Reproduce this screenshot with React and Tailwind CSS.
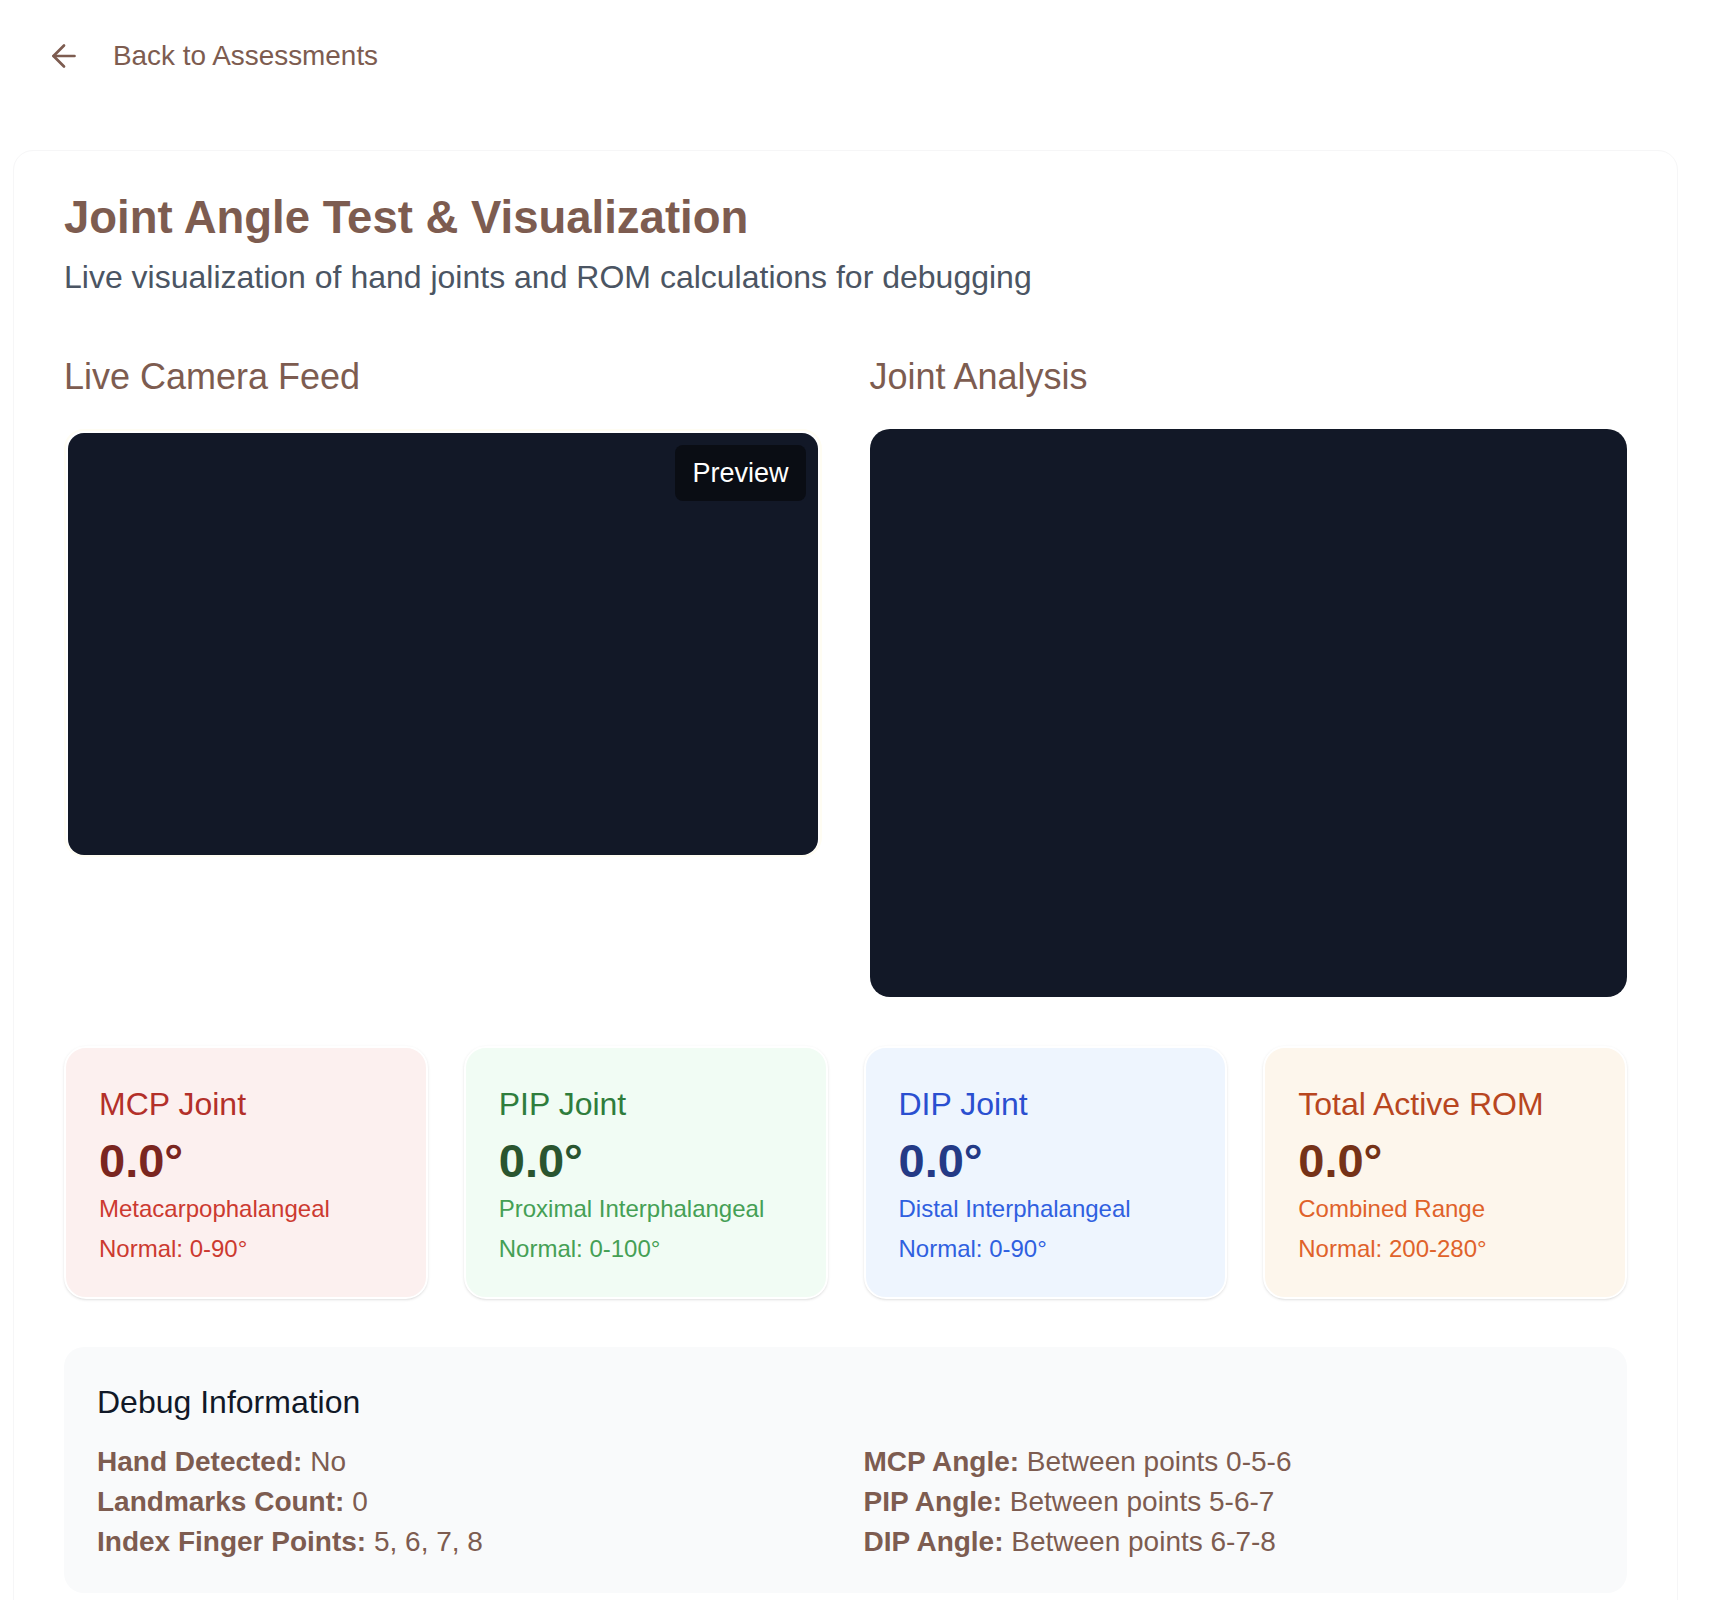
import React from 'react';
import { ArrowLeft } from 'lucide-react';

const joints = [
  {
    name: 'MCP Joint',
    value: '0.0°',
    full: 'Metacarpophalangeal',
    normal: 'Normal: 0-90°',
    bg: 'bg-[#fcf0ef]',
    title: 'text-[#b3302a]',
    val: 'text-[#7a2620]',
    sub: 'text-[#cc3a30]',
  },
  {
    name: 'PIP Joint',
    value: '0.0°',
    full: 'Proximal Interphalangeal',
    normal: 'Normal: 0-100°',
    bg: 'bg-[#f1fcf4]',
    title: 'text-[#2f7d3c]',
    val: 'text-[#2a5530]',
    sub: 'text-[#45a055]',
  },
  {
    name: 'DIP Joint',
    value: '0.0°',
    full: 'Distal Interphalangeal',
    normal: 'Normal: 0-90°',
    bg: 'bg-[#eef5fe]',
    title: 'text-[#2a4fd0]',
    val: 'text-[#243a86]',
    sub: 'text-[#2f60e0]',
  },
  {
    name: 'Total Active ROM',
    value: '0.0°',
    full: 'Combined Range',
    normal: 'Normal: 200-280°',
    bg: 'bg-[#fdf6ec]',
    title: 'text-[#b8461f]',
    val: 'text-[#753218]',
    sub: 'text-[#e0622a]',
  },
];

const debugLeft = [
  ['Hand Detected:', 'No'],
  ['Landmarks Count:', '0'],
  ['Index Finger Points:', '5, 6, 7, 8'],
];

const debugRight = [
  ['MCP Angle:', 'Between points 0-5-6'],
  ['PIP Angle:', 'Between points 5-6-7'],
  ['DIP Angle:', 'Between points 6-7-8'],
];

export default function App() {
  return (
    <div className="min-h-screen bg-white font-['Liberation_Sans',Arial,sans-serif] text-[#7d5c50]">
      {/* back link */}
      <div className="h-[150px] pt-[36px] pl-[46px]">
        <button className="flex items-center gap-[31px] text-[27.9px] leading-[40px] text-[#7d5c50]">
          <ArrowLeft size={36} strokeWidth={1.8} />
          <span>Back to Assessments</span>
        </button>
      </div>

      <div className="ml-[13px] w-[1665px] rounded-[20px] border border-[#f6f6f7] bg-white px-[50px] pt-[40px] pb-[50px]">
        <h1 className="text-[45.5px] leading-[54px] font-bold text-[#7d5c50]">Joint Angle Test &amp; Visualization</h1>
        <p className="mt-[12px] text-[32px] leading-[40px] text-[#4b5563]">
          Live visualization of hand joints and ROM calculations for debugging
        </p>

        <div className="mt-[56px] grid grid-cols-2 gap-[48px] items-start">
          <div>
            <h2 className="text-[36px] leading-[48px] text-[#7d5c50]">Live Camera Feed</h2>
            <div className="mt-[28px] rounded-[20px] border-2 border-[#fffdf3] pt-[2px] px-[2px]">
              <div className="relative aspect-video w-full rounded-[16px] bg-[#121827]">
                <span className="absolute top-[12px] right-[12px] rounded-[8px] bg-[#0a0d14] px-[17px] py-[8px] text-[27px] leading-[40px] text-white">
                  Preview
                </span>
              </div>
            </div>
          </div>
          <div>
            <h2 className="text-[36px] leading-[48px] text-[#7d5c50]">Joint Analysis</h2>
            <div className="mt-[28px] aspect-[4/3] w-full rounded-[20px] bg-[#121827]" />
          </div>
        </div>

        <div className="mt-[49px] grid grid-cols-4 gap-[36px]">
          {joints.map((j) => (
            <div
              key={j.name}
              className={`rounded-[22px] border-2 border-white shadow-sm ${j.bg} px-[33px] pt-[32px] pb-[30px]`}
            >
              <div className={`text-[32px] leading-[48px] ${j.title}`}>{j.name}</div>
              <div className={`mt-[5px] text-[47px] leading-[56px] font-bold ${j.val}`}>{j.value}</div>
              <div className={`mt-[2px] text-[24px] leading-[36px] ${j.sub}`}>{j.full}</div>
              <div className={`mt-[4px] text-[24px] leading-[36px] ${j.sub}`}>{j.normal}</div>
            </div>
          ))}
        </div>

        <div className="mt-[48px] rounded-[20px] bg-[#f9fafb] px-[33px] pt-[35px] pb-[31px]">
          <h3 className="text-[32px] leading-[40px] text-[#111827]">Debug Information</h3>
          <div className="mt-[20px] grid grid-cols-2 gap-[36px] text-[28px] leading-[40px] text-[#7d5c50]">
            <div>
              {debugLeft.map(([k, v]) => (
                <div key={k}>
                  <span className="font-bold">{k}</span> {v}
                </div>
              ))}
            </div>
            <div>
              {debugRight.map(([k, v]) => (
                <div key={k}>
                  <span className="font-bold">{k}</span> {v}
                </div>
              ))}
            </div>
          </div>
        </div>
      </div>
    </div>
  );
}
